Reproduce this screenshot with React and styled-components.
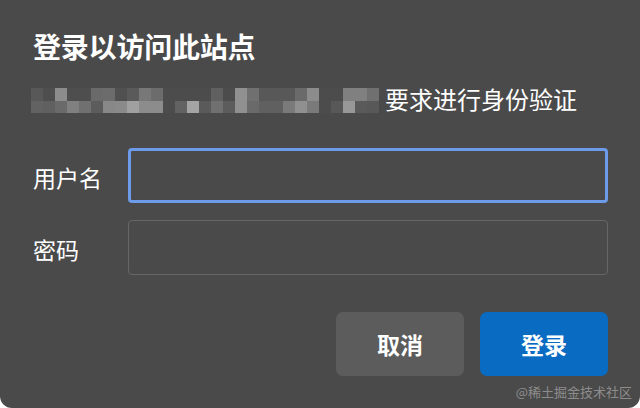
import React from "react";
import styled, { createGlobalStyle } from "styled-components";

const Global = createGlobalStyle`
  html, body { margin: 0; padding: 0; background: #ffffff; }
  body { font-family: "Noto Sans CJK SC", "Noto Sans", sans-serif; }
  * { box-sizing: border-box; }
`;

const Dialog = styled.div`
  position: relative;
  width: 640px;
  height: 408px;
  background: #4a4a4a;
  border-radius: 0 0 12px 12px;
  padding: 30px 32px 32px 33px;
  display: flex;
  flex-direction: column;
  color: #ffffff;
`;

const Title = styled.h1`
  margin: 0;
  font-size: 28px;
  line-height: 32px;
  font-weight: 700;
  letter-spacing: -0.2px;
`;

const Subtitle = styled.div`
  margin-top: 21px;
  display: flex;
  align-items: center;
  height: 32px;
  font-size: 24px;
  line-height: 32px;
`;

const Mosaic = styled.div`
  display: grid;
  grid-template-rows: 13px 12px;
  grid-auto-flow: column;
  grid-auto-columns: 12px;
  margin-left: -2px;
  margin-right: 6px;
  margin-top: 2px;
`;

const Cell = styled.span`
  background: ${(p) => p.$c};
`;

const Form = styled.div`
  margin-top: 33px;
  display: flex;
  flex-direction: column;
  gap: 17px;
`;

const Row = styled.label`
  display: flex;
  align-items: center;
`;

const Label = styled.span`
  width: 95px;
  font-size: 23px;
  line-height: 30px;
  padding-top: 2px;
`;

const Input = styled.input`
  flex: 1;
  height: 55px;
  background: #4a4a4a;
  border: ${(p) => (p.$focused ? "3px solid #6b9be9" : "1px solid #666666")};
  border-radius: 4px;
  outline: none;
  color: #fff;
  font: inherit;
  font-size: 20px;
  padding: 0 12px;
`;

const Actions = styled.div`
  margin-top: 37px;
  display: flex;
  justify-content: flex-end;
  gap: 16px;
`;

const Button = styled.button`
  width: 128px;
  height: 64px;
  border: none;
  border-radius: 7px;
  background: ${(p) => (p.$primary ? "#0a6bc2" : "#5c5c5c")};
  color: #ffffff;
  font-family: inherit;
  font-size: 23px;
  font-weight: 700;
  padding: 0;
`;

const Watermark = styled.span`
  position: absolute;
  right: 8px;
  bottom: 8px;
  font-size: 13px;
  line-height: 16px;
  color: rgba(200, 200, 200, 0.55);
  font-family: "Noto Sans CJK SC", sans-serif;
`;

const BG = "#4c4c4c";
const top = [
  "#585858", "#4e4e4e", "#8c8c8c", "#4e4e4e", "#4e4e4e", "#6a6a6a", "#6c6c6c", "#505050",
  "#5a5a5a", "#787878", "#6c6c6c", BG, BG, BG, BG, "#606060", BG, "#909090", "#707070",
  "#585858", "#585858", "#585858", "#6a6a6a", "#8c8c8c", BG, BG, "#808080", "#808080", "#707070",
];
const bottom = [
  "#626262", "#606060", "#6a6a6a", "#808080", "#707070", "#5c5c5c", "#888888", "#8a8a8a",
  "#a0a0a0", "#8c8c8c", "#8c8c8c", BG, "#626262", "#a4a4a4", "#5a5a5a", "#707070", "#5c5c5c",
  "#909090", "#6a6a6a", "#606060", "#606060", "#7a7a7a", "#909090", "#7a7a7a", BG, "#585858",
  "#989898", "#5a5a5a", "#585858",
];

export default function App() {
  return (
    <>
      <Global />
      <Dialog>
        <Title>登录以访问此站点</Title>
        <Subtitle>
          <Mosaic aria-hidden="true">
            {top.map((c, i) => (
              <React.Fragment key={i}>
                <Cell $c={c} />
                <Cell $c={bottom[i]} />
              </React.Fragment>
            ))}
          </Mosaic>
          <span>要求进行身份验证</span>
        </Subtitle>
        <Form>
          <Row>
            <Label>用户名</Label>
            <Input $focused type="text" />
          </Row>
          <Row>
            <Label>密码</Label>
            <Input type="password" />
          </Row>
        </Form>
        <Actions>
          <Button>取消</Button>
          <Button $primary>登录</Button>
        </Actions>
        <Watermark>@稀土掘金技术社区</Watermark>
      </Dialog>
    </>
  );
}
